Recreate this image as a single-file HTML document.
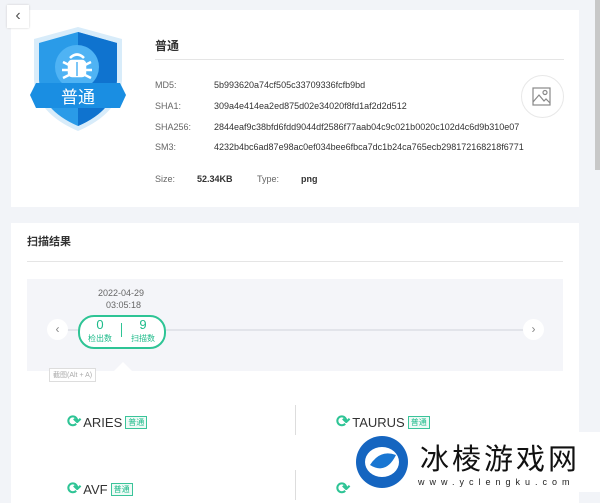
<!DOCTYPE html><html><head><style>
body{margin:0;width:600px;height:492px;overflow:hidden;background:#f2f4f8;font-family:"Liberation Sans","Noto Sans CJK SC",sans-serif;position:relative}
.a{position:absolute}
.card{position:absolute;background:#fff;left:11px;width:568px}
.lbl{position:absolute;left:155px;font-size:9px;color:#666}
.val{position:absolute;left:214px;font-size:9px;color:#333}
.g{color:#1dbb8a}
.tag{display:inline-block;border:1px solid #3ac49a;color:#1dbb8a;font-size:8px;padding:0 2px;line-height:11px;background:#effaf6;vertical-align:2px;margin-left:3px}
.eng{position:absolute;font-size:13px;color:#333;display:flex;align-items:center}
.ic{color:#2ec495;font-size:17px;font-weight:bold;margin-right:2px}
</style></head><body>
<div class="card" style="top:10px;height:197px"></div>
<div class="a" style="left:7px;top:5px;width:22px;height:23px;background:#fff;box-shadow:0 0 2px #ccc;font-size:16px;color:#555;text-align:center;line-height:22px">&#8249;</div>
<svg class="a" style="left:28px;top:25px" width="100" height="108" viewBox="0 0 100 108">
<path d="M50 2 L94 14 L94 55 Q92 88 50 106 Q8 88 6 55 L6 14Z" fill="#d8ecfa"/>
<path d="M50 7 L89 18 L89 55 Q87 85 50 101 Q13 85 11 55 L11 18Z" fill="#2a9be8"/>
<path d="M50 7 L89 18 L89 55 Q87 85 50 101Z" fill="#0f73cf"/>
<circle cx="49" cy="42" r="22" fill="#4fb3f4"/>
<g fill="none" stroke="#fff" stroke-width="2.5"><path d="M42 33 Q49 26 56 33"/><rect x="41" y="36" width="16" height="15" rx="3" fill="#fff"/><path d="M41 40 L35 37 M41 45 L34 45 M41 50 L35 53 M57 40 L63 37 M57 45 L64 45 M57 50 L63 53"/></g>
<path d="M49 37 V51" stroke="#4fb3f4" stroke-width="1.5"/>
<path d="M2 70 L8 58 L92 58 L98 70 L92 83 L8 83Z" fill="#1a8ee2"/>
<text x="50" y="78" font-size="17" text-anchor="middle" fill="#fff" font-family="Noto Sans CJK SC">普通</text>
</svg>
<div class="a" style="left:155px;top:37px;font-size:12px;font-weight:bold;color:#333">普通</div>
<div class="a" style="left:155px;top:59px;width:409px;height:1px;background:#e5e5e5"></div>
<div class="lbl" style="top:80px">MD5:</div><div class="val" style="top:80px">5b993620a74cf505c33709336fcfb9bd</div>
<div class="lbl" style="top:101px">SHA1:</div><div class="val" style="top:101px">309a4e414ea2ed875d02e34020f8fd1af2d2d512</div>
<div class="lbl" style="top:122px">SHA256:</div><div class="val" style="top:122px">2844eaf9c38bfd6fdd9044df2586f77aab04c9c021b0020c102d4c6d9b310e07</div>
<div class="lbl" style="top:142px">SM3:</div><div class="val" style="top:142px">4232b4bc6ad87e98ac0ef034bee6fbca7dc1b24ca765ecb298172168218f6771</div>
<div class="lbl" style="top:174px">Size:</div><div class="a" style="left:197px;top:174px;font-size:9px;font-weight:bold;color:#333">52.34KB</div>
<div class="lbl" style="left:257px;top:174px">Type:</div><div class="a" style="left:301px;top:174px;font-size:9px;font-weight:bold;color:#333">png</div>
<div class="a" style="left:521px;top:75px;width:41px;height:41px;border:1px solid #e8e8e8;border-radius:50%"></div>
<svg class="a" style="left:532px;top:87px" width="19" height="19" viewBox="0 0 19 19" fill="none" stroke="#888" stroke-width="1.2"><rect x="1" y="1" width="17" height="17"/><circle cx="13" cy="5.5" r="2"/><path d="M1 15 L7 8 L12 14 L14 12 L18 16"/></svg>
<div class="card" style="top:223px;height:280px"></div>
<div class="a" style="left:27px;top:233px;font-size:11px;font-weight:bold;color:#333">扫描结果</div>
<div class="a" style="left:27px;top:261px;width:536px;height:1px;background:#e5e5e5"></div>
<div class="a" style="left:27px;top:279px;width:536px;height:92px;background:#f4f5f9"></div>
<div class="a" style="left:98px;top:287px;font-size:9px;color:#666;text-align:center;line-height:12px">2022-04-29<br>&nbsp;&nbsp;03:05:18</div>
<div class="a" style="left:65px;top:329px;width:458px;height:2px;background:#e2e4ea"></div>
<div class="a" style="left:47px;top:319px;width:21px;height:21px;border-radius:50%;background:#fff;text-align:center;line-height:20px;color:#888;font-size:12px">&#8249;</div>
<div class="a" style="left:523px;top:319px;width:21px;height:21px;border-radius:50%;background:#fff;text-align:center;line-height:20px;color:#888;font-size:12px">&#8250;</div>
<div class="a" style="left:78px;top:315px;width:84px;height:30px;border:2px solid #2ec495;border-radius:16px;background:#fff"></div>
<div class="a g" style="left:86px;top:319px;width:28px;text-align:center;font-size:13px;line-height:12px">0<br><span style="font-size:8px">检出数</span></div>
<div class="a" style="left:121px;top:323px;width:1px;height:14px;background:#2ec495"></div>
<div class="a g" style="left:129px;top:319px;width:28px;text-align:center;font-size:13px;line-height:12px">9<br><span style="font-size:8px">扫描数</span></div>
<div class="a" style="left:114px;top:362px;width:0;height:0;border:9px solid transparent;border-bottom-color:#fff;border-top:0"></div>
<div class="a" style="left:49px;top:368px;font-size:7px;color:#aaa;border:1px solid #ddd;background:#fff;padding:1px 3px">截图(Alt + A)</div>
<div class="a" style="left:295px;top:405px;width:1px;height:30px;background:#ddd"></div>
<div class="a" style="left:295px;top:470px;width:1px;height:30px;background:#ddd"></div>
<div class="eng" style="left:67px;top:412px"><span class="ic">&#x27F3;</span>ARIES<span class="tag">普通</span></div>
<div class="eng" style="left:336px;top:412px"><span class="ic">&#x27F3;</span>TAURUS<span class="tag">普通</span></div>
<div class="eng" style="left:67px;top:479px"><span class="ic">&#x27F3;</span>AVF<span class="tag">普通</span></div>
<div class="eng" style="left:336px;top:479px"><span class="ic">&#x27F3;</span></div>
<div class="a" style="left:579px;top:425px;width:21px;height:67px;background:#f2f4f8"></div>
<div class="a" style="left:595px;top:0;width:5px;height:170px;background:#c8c8c8"></div>
<div class="a" style="left:412px;top:432px;width:188px;height:60px;background:#fff"></div>
<svg class="a" style="left:352px;top:432px" width="60" height="60" viewBox="0 0 60 60"><ellipse cx="30" cy="30" rx="26" ry="26" fill="#1565c0"/><ellipse cx="30" cy="30" rx="17" ry="15" fill="#fff"/><path d="M18 33 Q28 17 44 23 Q34 43 18 33Z" fill="#1976d2"/></svg>
<div class="a" style="left:420px;top:436px;font-size:29px;color:#111;letter-spacing:3px;font-family:'Noto Sans CJK SC',sans-serif">冰棱游戏网</div>
<div class="a" style="left:418px;top:477px;font-size:9px;color:#222;letter-spacing:5px">www.yclengku.com</div>
</body></html>
